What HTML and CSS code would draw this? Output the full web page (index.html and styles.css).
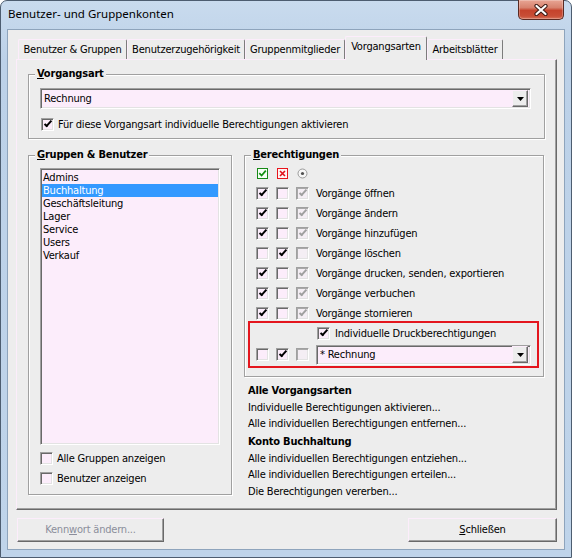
FILE: index.html
```html
<!DOCTYPE html>
<html>
<head>
	<meta charset="utf-8">
	<title>Benutzer- und Gruppenkonten</title>
	<link rel="stylesheet" href="styles.css">
</head>
<body>
	<div class="window">
		<div class="window__titlebar">
			<span class="window__title">Benutzer- und Gruppenkonten</span>
			<span class="window__close">
				<svg width="14" height="12" viewBox="0 0 14 12">
					<path d="M2.5 2 L11.5 10 M11.5 2 L2.5 10" stroke="#3b1a14" stroke-width="4.2" stroke-linecap="round" fill="none"/>
					<path d="M2.5 2 L11.5 10 M11.5 2 L2.5 10" stroke="#fff" stroke-width="2.2" stroke-linecap="round" fill="none"/>
				</svg>
			</span>
		</div>

		<div class="window__client">
			<div class="tabs">
				<span class="tab tab_1">Benutzer &amp; Gruppen</span>
				<span class="tab tab_2">Benutzerzugehörigkeit</span>
				<span class="tab tab_3">Gruppenmitglieder</span>
				<span class="tab tab_4 tab_active">Vorgangsarten</span>
				<span class="tab tab_5">Arbeitsblätter</span>
			</div>

			<div class="pane">
				<div class="group group_type">
					<div class="group__title"><u>V</u>organgsart</div>
					<div class="combo combo_type">
						<span class="combo__value">Rechnung</span>
						<span class="combo__btn"><svg width="7" height="4"><path d="M0 0h7L3.5 4z"/></svg></span>
					</div>
					<div class="check-row check-row_type">
						<span class="cb cb_on"></span>
						<span>Für diese Vorgangsart individuelle Berechtigungen aktivieren</span>
					</div>
				</div>

				<div class="columns">
					<div class="group group_users">
						<div class="group__title"><u>G</u>ruppen &amp; Benutzer</div>
						<ul class="list">
							<li class="list__item">Admins</li>
							<li class="list__item list__item_sel">Buchhaltung</li>
							<li class="list__item">Geschäftsleitung</li>
							<li class="list__item">Lager</li>
							<li class="list__item">Service</li>
							<li class="list__item">Users</li>
							<li class="list__item">Verkauf</li>
						</ul>
						<div class="check-row check-row_users">
							<span class="cb"></span>
							<span>Alle Gruppen anzeigen</span>
						</div>
						<div class="check-row check-row_users">
							<span class="cb"></span>
							<span>Benutzer anzeigen</span>
						</div>
					</div>

					<div class="col-right">
						<div class="group group_rights">
							<div class="group__title"><u>B</u>erechtigungen</div>
							<div class="perms">
								<div class="perm perm_head">
									<span class="cell">
										<svg width="11" height="11" viewBox="0 0 11 11">
											<rect x="0.5" y="0.5" width="10" height="10" fill="#f6fff6" stroke="#178a17"/>
											<path d="M2.3 5.2 L4.6 7.6 L8.8 2.6" stroke="#129012" stroke-width="1.7" fill="none"/>
										</svg>
									</span>
									<span class="cell">
										<svg width="11" height="11" viewBox="0 0 11 11">
											<rect x="0.5" y="0.5" width="10" height="10" fill="#fff4f4" stroke="#e8141c"/>
											<path d="M3 3 L8 8 M8 3 L3 8" stroke="#e0101a" stroke-width="1.6" fill="none"/>
										</svg>
									</span>
									<span class="cell">
										<svg width="11" height="11" viewBox="0 0 11 11">
											<circle cx="5.5" cy="5.5" r="4.5" fill="#f7f7f7" stroke="#9a9a9a"/>
											<circle cx="5.5" cy="5.5" r="1.6" fill="#505050"/>
										</svg>
									</span>
								</div>
								<div class="perm">
									<span class="cb cb_on"></span><span class="cb"></span><span class="cb cb_dis cb_on"></span>
									<span class="perm__label">Vorgänge öffnen</span>
								</div>
								<div class="perm">
									<span class="cb cb_on"></span><span class="cb"></span><span class="cb cb_dis cb_on"></span>
									<span class="perm__label">Vorgänge ändern</span>
								</div>
								<div class="perm">
									<span class="cb cb_on"></span><span class="cb"></span><span class="cb cb_dis cb_on"></span>
									<span class="perm__label">Vorgänge hinzufügen</span>
								</div>
								<div class="perm">
									<span class="cb"></span><span class="cb cb_on"></span><span class="cb cb_dis"></span>
									<span class="perm__label">Vorgänge löschen</span>
								</div>
								<div class="perm">
									<span class="cb cb_on"></span><span class="cb"></span><span class="cb cb_dis cb_on"></span>
									<span class="perm__label">Vorgänge drucken, senden, exportieren</span>
								</div>
								<div class="perm">
									<span class="cb cb_on"></span><span class="cb"></span><span class="cb cb_dis cb_on"></span>
									<span class="perm__label">Vorgänge verbuchen</span>
								</div>
								<div class="perm">
									<span class="cb cb_on"></span><span class="cb"></span><span class="cb cb_dis cb_on"></span>
									<span class="perm__label">Vorgänge stornieren</span>
								</div>

								<div class="print-box">
									<div class="perm perm_print">
										<span class="cb cb_on"></span>
										<span>Individuelle Druckberechtigungen</span>
									</div>
									<div class="perm perm_doc">
										<span class="cb"></span><span class="cb cb_on"></span><span class="cb cb_dis"></span>
										<div class="combo combo_doc">
											<span class="combo__value">* Rechnung</span>
											<span class="combo__btn"><svg width="7" height="4"><path d="M0 0h7L3.5 4z"/></svg></span>
										</div>
									</div>
								</div>
							</div>
						</div>

						<div class="actions">
							<div class="actions__head">Alle Vorgangsarten</div>
							<div>Individuelle Berechtigungen aktivieren...</div>
							<div>Alle individuellen Berechtigungen entfernen...</div>
							<div class="actions__head actions__head_next">Konto Buchhaltung</div>
							<div>Alle individuellen Berechtigungen entziehen...</div>
							<div>Alle individuellen Berechtigungen erteilen...</div>
							<div>Die Berechtigungen vererben...</div>
						</div>
					</div>
				</div>
			</div>

			<div class="buttons">
				<span class="btn btn_pwd btn_disabled">Kenn<u>w</u>ort ändern...</span>
				<span class="btn btn_close"><u>S</u>chließen</span>
			</div>
		</div>
	</div>
</body>
</html>
```

FILE: styles.css
```css
body {
	margin: 0;
	font-size: 11px;
	font-family: "DejaVu Sans Condensed", "DejaVu Sans", sans-serif;
	letter-spacing: -0.2px;
	color: #000;
}

u { text-decoration: underline; text-underline-offset: 1px; }


/* window frame */
.window {
	width: 572px;
	height: 558px;
	box-sizing: border-box;
	border: 1px solid #4d5d70;
	border-radius: 7px 7px 0 0;
	background: linear-gradient(#c9dbee, #bcd1e8 60px, #bfd4ea);
	display: flex;
	flex-direction: column;
}
	.window__titlebar {
		height: 28px;
		display: flex;
		align-items: flex-start;
		justify-content: space-between;
	}
	.window__title {
		margin: 5px 0 0 7px;
		font: 11.5px/16px "Noto Sans", sans-serif;
		letter-spacing: 0;
		color: #000;
	}
	.window__close {
		width: 46px;
		height: 20px;
		margin: -1px 7px 0 0;
		box-sizing: border-box;
		border: 1px solid #5a2a22;
		border-top: 0;
		border-radius: 0 0 5px 5px;
		background: linear-gradient(#e8a594, #d7826e 40%, #c5432c 55%, #c84e36 85%, #d7755c);
		box-shadow: inset 0 0 0 1px rgba(255,255,255,.25);
		display: flex;
		align-items: center;
		justify-content: center;
	}

	.window__client {
		flex: 1;
		margin: 0 6px 7px;
		border: 1px solid #8ea4bc;
		background: #ededed;
		display: flex;
		flex-direction: column;
	}


/* tabs */
.tabs {
	height: 23px;
	margin: 6px 0 0 10px;
	display: flex;
	align-items: flex-end;
}
	.tab {
		height: 20px;
		box-sizing: border-box;
		border-top: 1px solid #fcedfb;
		border-left: 1px solid #fcedfb;
		border-right: 1px solid #7c7c7c;
		border-radius: 2px 2px 0 0;
		text-align: center;
		line-height: 19px;
		white-space: nowrap;
	}
	.tab_1 { width: 109px; }
	.tab_2 { width: 118px; }
	.tab_3 { width: 100px; }
	.tab_4 { width: 82px; }
	.tab_5 { width: 76px; }

	.tab_active {
		height: 24px;
		margin-bottom: -1px;
		line-height: 19px;
		background: #ededed;
		position: relative;
	}

.pane {
	height: 451px;
	margin: 0 7px 0 8px;
	box-sizing: border-box;
	border-top: 1px solid #fcedfb;
	border-left: 1px solid #fcedfb;
	border-right: 1px solid #696969;
	border-bottom: 1px solid #696969;
	box-shadow: inset -1px -1px 0 #a0a0a0;
	padding: 14px 11px 0 11px;
}


/* group boxes */
.group {
	border: 1px solid #a0a0a0;
	box-shadow: inset 1px 1px 0 #fff, 1px 1px 0 #fff;
}
	.group__title {
		width: fit-content;
		height: 14px;
		margin: -8px 0 0 6px;
		padding: 0 2px;
		background: #ededed;
		font-weight: bold;
		line-height: 14px;
	}

.group_type {
	height: 65px;
	box-sizing: border-box;
}


/* sunken inputs */
.combo,
.list {
	box-sizing: border-box;
	border: 1px solid;
	border-color: #a0a0a0 #fff #fff #a0a0a0;
	box-shadow: inset 1px 1px 0 #696969, inset -1px -1px 0 #e3e3e3;
	background: #fcedfb;
}

.combo {
	height: 21px;
	padding: 2px 2px 2px 3px;
	display: flex;
	align-items: center;
}
	.combo__value { flex: 1; }
	.combo__btn {
		width: 16px;
		height: 17px;
		box-sizing: border-box;
		border: 1px solid;
		border-color: #fcedfb #696969 #696969 #fcedfb;
		box-shadow: inset -1px -1px 0 #a0a0a0;
		background: #ededed;
		display: flex;
		align-items: center;
		justify-content: center;
	}

.combo_type { margin: 7px 13px 0 11px; }
.combo_doc { flex: 1; height: 20px; margin-right: 6px; }


/* checkboxes */
.cb {
	width: 13px;
	height: 13px;
	flex: none;
	box-sizing: border-box;
	border: 1px solid;
	border-color: #a0a0a0 #fff #fff #a0a0a0;
	box-shadow: inset 1px 1px 0 #696969, inset -1px -1px 0 #e3e3e3;
	background: #fcedfb;
	display: flex;
	align-items: center;
	justify-content: center;
}
	.cb_on::after {
		content: "";
		width: 2px;
		height: 6px;
		margin: -3px 0 0 0;
		border: solid #000;
		border-width: 0 2px 2px 0;
		transform: rotate(42deg);
	}
	.cb_dis {
		background: #f4eef4;
		box-shadow: inset 1px 1px 0 #a9a9a9, inset -1px -1px 0 #e3e3e3;
	}
		.cb_dis.cb_on::after { border-color: #a0a0a0; }

.check-row {
	height: 13px;
	display: flex;
	align-items: center;
	gap: 4px;
}
.check-row_type { margin: 9px 0 0 12px; }
.check-row_users { margin: 7px 0 0 11px; }
.check-row_users + .check-row_users { margin-top: 7px; }


/* two columns */
.columns {
	margin-top: 16px;
	display: grid;
	grid-template-columns: 204px 300px;
	column-gap: 12px;
	align-items: start;
}

.group_users { height: 340px; box-sizing: border-box; }

.list {
	width: 180px;
	height: 277px;
	margin: 6px 0 0 11px;
	padding: 2px 1px;
	list-style: none;
}
	.list__item {
		height: 13px;
		line-height: 13px;
		padding-left: 1px;
	}
	.list__item_sel {
		background: #3399ff;
		color: #fff;
	}


/* permissions */
.perms { padding: 1px 0 8px 11px; }
	.perm {
		height: 20px;
		display: flex;
		align-items: center;
		gap: 7px;
	}
	.cell {
		width: 13px;
		display: flex;
		justify-content: center;
	}

.print-box {
	margin: -2px 4px 0 -8px;
	border: 2px solid #e4161e;
	padding-left: 6px;
}
	.perm_print { padding-left: 61px; gap: 5px; }
	.perm_doc { height: 23px; }


/* action links */
.actions {
	margin-top: 6px;
	padding-left: 4px;
	line-height: 16.5px;
	white-space: nowrap;
}
	.actions__head { font-weight: bold; }
	.actions__head_next { margin-top: 1.5px; }


/* dialog buttons */
.buttons {
	margin-top: 8px;
	padding: 0 7px 0 9px;
	display: flex;
	justify-content: space-between;
}
	.btn {
		height: 24px;
		box-sizing: border-box;
		border: 1px solid;
		border-color: #fcedfb #696969 #696969 #fcedfb;
		box-shadow: inset -1px -1px 0 #a0a0a0;
		text-align: center;
		line-height: 21px;
	}
	.btn_pwd { width: 147px; }
	.btn_close { width: 149px; }
	.btn_disabled { color: #8b8d9b; }
```
